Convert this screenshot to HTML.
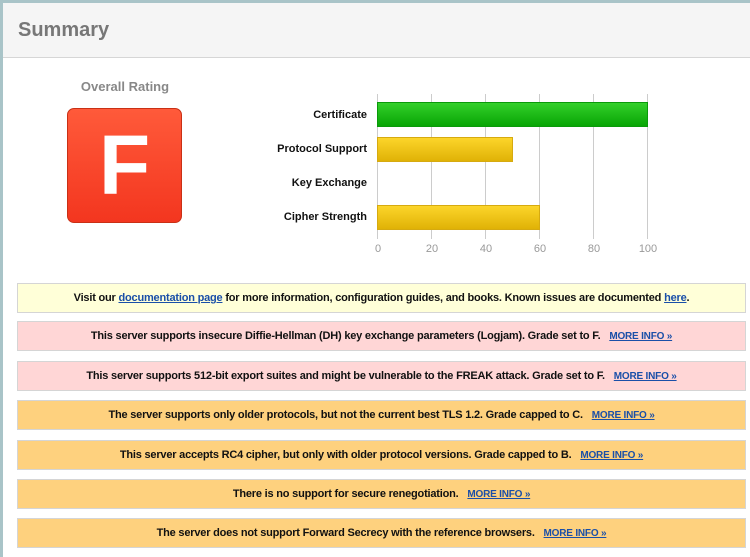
<!DOCTYPE html>
<html><head><style>
body{margin:0;width:750px;height:557px;background:#a9c4c8;font-family:"Liberation Sans",Arial,sans-serif;position:relative;overflow:hidden}
#main{position:absolute;left:3px;top:3px;width:747px;height:554px;background:#fff}
#hdr{position:absolute;left:0;top:0;width:747px;height:54px;background:#f5f5f5;border-bottom:1px solid #d6d6d6}
#hdr h1{margin:0;position:absolute;left:15px;top:16px;font-size:20px;color:#777;font-weight:bold}
.or{position:absolute;left:64px;top:76px;width:116px;text-align:center;font-size:13px;font-weight:bold;color:#888}
.grade{position:absolute;left:64px;top:105px;width:113px;height:113px;border:1px solid #c93015;border-radius:7px;background:linear-gradient(#ff5a3a,#f3361f);color:#fff;font-size:84px;font-weight:bold;text-align:center;line-height:113px}
.lbl{position:absolute;right:383px;font-size:11px;font-weight:bold;color:#111;white-space:nowrap}
.grid{position:absolute;top:91px;width:1px;height:145px;background:#ccc}
.bar{position:absolute;left:374px;height:25px}
.g{background:linear-gradient(#33d02a,#08a505);border:1px solid #0a9a0a;box-sizing:border-box}
.y{background:linear-gradient(#fcd52a,#e0b206);border:1px solid #d6aa10;box-sizing:border-box}
.tk{position:absolute;top:240px;font-size:11px;color:#999;width:30px;text-align:center}
.box{position:absolute;left:14px;width:729px;height:30px;border:1px solid #d5d5d5;box-sizing:border-box;font-size:11px;letter-spacing:-0.2px;font-weight:bold;color:#111;text-align:center;line-height:28px;white-space:nowrap}
.box a{color:#1a4fa8;text-decoration:underline}
.m{margin-left:6px;font-size:10px}
.yl{background:#ffffd8}.pk{background:#ffd6d6}.or2{background:#fed17e}
</style></head><body><div id="main">
<div id="hdr"><h1>Summary</h1></div>
<div class="or">Overall Rating</div>
<div class="grade">F</div>
<div class="lbl" style="top:106px">Certificate</div>
<div class="lbl" style="top:140px">Protocol Support</div>
<div class="lbl" style="top:174px">Key Exchange</div>
<div class="lbl" style="top:208px">Cipher Strength</div>
<div class="grid" style="left:374px"></div>
<div class="grid" style="left:428px"></div>
<div class="grid" style="left:482px"></div>
<div class="grid" style="left:536px"></div>
<div class="grid" style="left:590px"></div>
<div class="grid" style="left:644px"></div>
<div class="bar g" style="top:99px;width:271px"></div>
<div class="bar y" style="top:134px;width:136px"></div>
<div class="bar y" style="top:202px;width:163px"></div>
<div class="tk" style="left:360px">0</div>
<div class="tk" style="left:414px">20</div>
<div class="tk" style="left:468px">40</div>
<div class="tk" style="left:522px">60</div>
<div class="tk" style="left:576px">80</div>
<div class="tk" style="left:630px">100</div>
<div class="box yl" style="top:280px">Visit our <a>documentation page</a> for more information, configuration guides, and books. Known issues are documented <a>here</a>.</div>
<div class="box pk" style="top:318px">This server supports insecure Diffie-Hellman (DH) key exchange parameters (Logjam). Grade set to F. <a class="m">MORE INFO »</a></div>
<div class="box pk" style="top:358px">This server supports 512-bit export suites and might be vulnerable to the FREAK attack. Grade set to F. <a class="m">MORE INFO »</a></div>
<div class="box or2" style="top:397px">The server supports only older protocols, but not the current best TLS 1.2. Grade capped to C. <a class="m">MORE INFO »</a></div>
<div class="box or2" style="top:437px">This server accepts RC4 cipher, but only with older protocol versions. Grade capped to B. <a class="m">MORE INFO »</a></div>
<div class="box or2" style="top:476px">There is no support for secure renegotiation. <a class="m">MORE INFO »</a></div>
<div class="box or2" style="top:515px">The server does not support Forward Secrecy with the reference browsers. <a class="m">MORE INFO »</a></div>
</div></body></html>
